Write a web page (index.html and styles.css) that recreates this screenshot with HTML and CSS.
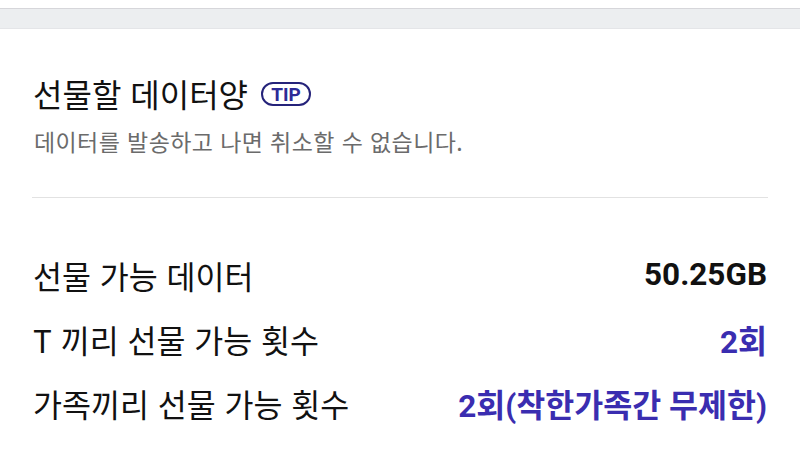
FILE: index.html
```html
<!DOCTYPE html>
<html lang="ko">
<head>
<meta charset="utf-8">
<link rel="stylesheet" href="styles.css">
</head>
<body>
<div class="top-space"></div>
<div class="band"></div>
<main class="content">
  <section class="head">
    <h1 class="title">선물할 데이터양 <span class="tip">TIP</span></h1>
    <p class="desc">데이터를 발송하고 나면 취소할 수 없습니다.</p>
  </section>
  <hr class="divider">
  <section class="rows">
    <div class="row"><span class="label">선물 가능 데이터</span><span class="value">50.25GB</span></div>
    <div class="row"><span class="label">T 끼리 선물 가능 횟수</span><span class="value accent">2회</span></div>
    <div class="row"><span class="label">가족끼리 선물 가능 횟수</span><span class="value accent">2회(착한가족간 무제한)</span></div>
  </section>
</main>
</body>
</html>
```

FILE: styles.css
```css
html, body {
  margin: 0;
  padding: 0;
  background: #ffffff;
  font-family: "Noto Sans CJK KR", "Noto Sans", sans-serif;
  color: #111111;
}
.top-space {
  height: 8px;
  background: #ffffff;
  border-bottom: 1px solid #d6d6da;
}
.band {
  height: 19px;
  background: #eceef0;
  border-bottom: 1px solid #e4e5e8;
}
.content {
  padding: 0 32px;
}
.head {
  padding-top: 42px;
}
.title {
  margin: 0;
  font-size: 32px;
  font-weight: 400;
  line-height: 44px;
  display: flex;
  align-items: center;
  gap: 13px;
  padding-left: 1px;
}
.tip {
  display: inline-flex;
  align-items: center;
  justify-content: center;
  height: 20px;
  width: 46px;
  box-sizing: content-box;
  border: 2px solid #25237a;
  border-radius: 14px;
  font-family: "Roboto", "Noto Sans", sans-serif;
  font-weight: 700;
  font-size: 19px;
  color: #2d2a96;
  line-height: 1;
  margin-top: 2px;
}
.desc {
  margin: 10px 0 0 2px;
  font-size: 23px;
  letter-spacing: 0.4px;
  line-height: 32px;
  color: #6b6b6b;
}
.divider {
  margin: 40px 0 0 0;
  border: 0;
  border-top: 1px solid #e2e2e2;
  height: 0;
}
.rows {
  padding-top: 55px;
  display: flex;
  flex-direction: column;
  gap: 21px;
}
.row {
  display: flex;
  justify-content: space-between;
  align-items: center;
  height: 43px;
}
.label {
  font-size: 31.5px;
  padding-left: 1px;
  color: #111111;
}
.value {
  font-family: "Roboto", "Noto Sans CJK KR", sans-serif;
  font-weight: 700;
  font-size: 31.5px;
  color: #111111;
  padding-right: 1px;
}
.accent {
  color: #3a2db0;
}
```
